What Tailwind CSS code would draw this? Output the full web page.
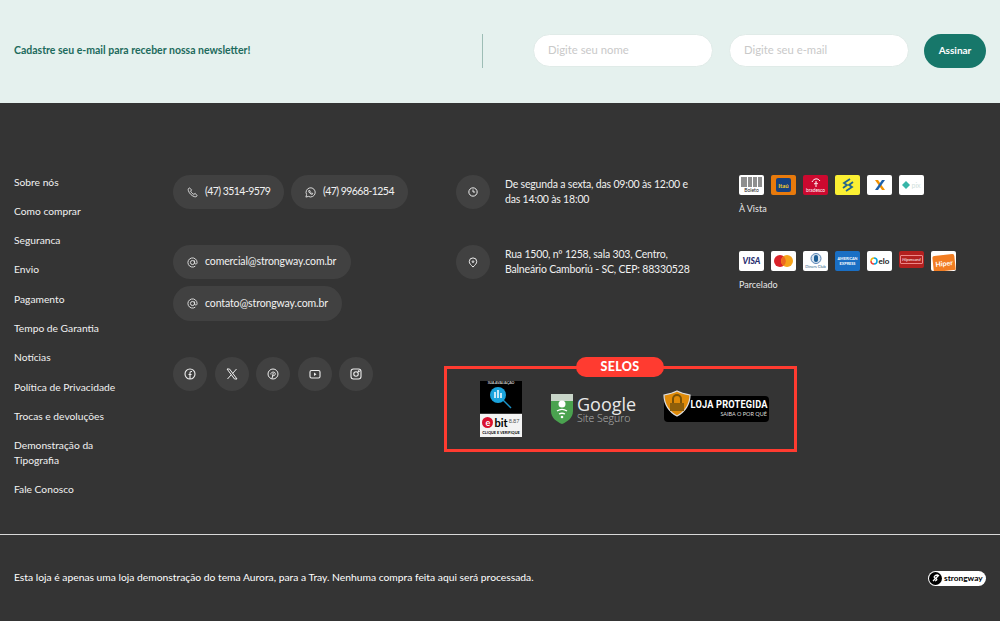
<!DOCTYPE html>
<html lang="pt-BR">
<head>
<meta charset="utf-8">
<script src="https://cdn.jsdelivr.net/npm/@tailwindcss/browser@4"></script>
</head>
<body class="bg-[#343434] font-['Lato','Noto_Sans',sans-serif]">
<div class="w-[1000px] h-[621px] overflow-hidden flex flex-col">

  <section class="h-[103px] bg-[#e5f1ee] flex items-center pl-[14px] pr-[14px] pb-[2px] shrink-0">
    <p class="w-[468px] text-[10.5px] font-bold text-[#1d6b5c]">Cadastre seu e-mail para receber nossa newsletter!</p>
    <div class="w-px h-[34px] bg-[#9dbdb5]"></div>
    <div class="ml-[50px] w-[180px] h-[33px] rounded-full bg-white border border-[#e0ebe8] flex items-center pl-[14px] text-[11.3px] text-[#c9c9c9]">Digite seu nome</div>
    <div class="ml-[16px] w-[180px] h-[33px] rounded-full bg-white border border-[#e0ebe8] flex items-center pl-[14px] text-[11.3px] text-[#c9c9c9]">Digite seu e-mail</div>
    <div class="ml-[15px] w-[62px] h-[34px] rounded-full bg-[#17776a] flex items-center justify-center text-[10px] font-bold text-white">Assinar</div>
  </section>

  <section class="flex pl-[14px] pt-[72px] h-[431px] shrink-0 text-[#f1f1f1]">
    <nav class="w-[159px] flex flex-col gap-[14.3px] text-[10.25px] leading-[15px] -mt-[0.5px]">
      <a>Sobre nós</a>
      <a>Como comprar</a>
      <a>Seguranca</a>
      <a>Envio</a>
      <a>Pagamento</a>
      <a>Tempo de Garantia</a>
      <a>Notícias</a>
      <a>Política de Privacidade</a>
      <a>Trocas e devoluções</a>
      <a class="w-[110px]">Demonstração da Tipografia</a>
      <a>Fale Conosco</a>
    </nav>

    <div class="w-[283px] flex flex-col">
      <div class="flex gap-[7px]">
        <div class="h-[34px] w-[111px] rounded-full bg-[#414141] flex items-center pl-[14px] gap-[7px] text-[10.5px] tracking-[-0.55px]">
          <svg class="w-[11px] h-[11px]" viewBox="0 0 24 24" fill="none" stroke="#e5e5e5" stroke-width="2"><path d="M5 2c-2 1-3 3-2 6 2 6 7 11 13 13 3 1 5 0 6-2l-4-5-3 2c-3-1-6-4-7-7l2-3z"/></svg>
          <span>(47) 3514-9579</span>
        </div>
        <div class="h-[34px] w-[117px] rounded-full bg-[#414141] flex items-center pl-[14px] gap-[7px] text-[10.5px] tracking-[-0.55px]">
          <svg class="w-[11px] h-[11px]" viewBox="0 0 24 24" fill="none" stroke="#e5e5e5" stroke-width="2"><path d="M2 22l1.5-5.5A10 10 0 1 1 7.5 20.500z"/><path d="M8 8c0 4 4 8 8 8l1-2-3-1-1 1c-1-.5-2-1.500-2.500-2.500l1-1-1-3z"/></svg>
          <span>(47) 99668-1254</span>
        </div>
      </div>
      <div class="mt-[36px] h-[34px] w-[178px] rounded-full bg-[#414141] flex items-center pl-[14px] gap-[7px] text-[10.5px] tracking-[-0.12px]">
        <svg class="w-[11px] h-[11px]" viewBox="0 0 24 24" fill="none" stroke="#e5e5e5" stroke-width="2"><circle cx="12" cy="12" r="4.500"/><path d="M16.500 7.500v6a3 3 0 0 0 5.500 0V12a10 10 0 1 0-4 8"/></svg>
        <span>comercial@strongway.com.br</span>
      </div>
      <div class="mt-[7px] h-[35px] w-[169px] rounded-full bg-[#414141] flex items-center pl-[14px] gap-[7px] text-[10.5px] tracking-[-0.12px]">
        <svg class="w-[11px] h-[11px]" viewBox="0 0 24 24" fill="none" stroke="#e5e5e5" stroke-width="2"><circle cx="12" cy="12" r="4.500"/><path d="M16.500 7.500v6a3 3 0 0 0 5.500 0V12a10 10 0 1 0-4 8"/></svg>
        <span>contato@strongway.com.br</span>
      </div>
      <div class="mt-[36px] flex gap-[7.500px]">
        <div class="w-[34px] h-[34px] rounded-full bg-[#414141] flex items-center justify-center">
          <svg class="w-[12px] h-[12px]" viewBox="0 0 24 24" fill="none" stroke="#eee" stroke-width="2.200"><circle cx="12" cy="12" r="10"/><path d="M16 7h-1.500C13 7 12 8 12 9.500V22M9 13h6"/></svg>
        </div>
        <div class="w-[34px] h-[34px] rounded-full bg-[#414141] flex items-center justify-center">
          <svg class="w-[12px] h-[12px]" viewBox="0 0 24 24" fill="none" stroke="#eee" stroke-width="2"><path d="M2 2h5l15 20h-5z"/><path d="M21 2l-8 9M10.500 13.500L3 22"/></svg>
        </div>
        <div class="w-[34px] h-[34px] rounded-full bg-[#414141] flex items-center justify-center">
          <svg class="w-[12px] h-[12px]" viewBox="0 0 24 24" fill="none" stroke="#eee" stroke-width="2"><circle cx="12" cy="12" r="10"/><path d="M10 21l2.500-11M8 13c-2-5 8-7 8.500-2 .3 4-4 6-5 3"/></svg>
        </div>
        <div class="w-[34px] h-[34px] rounded-full bg-[#414141] flex items-center justify-center">
          <svg class="w-[12px] h-[12px]" viewBox="0 0 24 24" fill="none" stroke="#eee" stroke-width="2.200"><rect x="2" y="5" width="20" height="15" rx="3"/><path d="M10 9l5 3.500-5 3.500z" fill="#eee" stroke="none"/></svg>
        </div>
        <div class="w-[34px] h-[34px] rounded-full bg-[#414141] flex items-center justify-center">
          <svg class="w-[12px] h-[12px]" viewBox="0 0 24 24" fill="none" stroke="#eee" stroke-width="2.200"><rect x="2" y="2" width="20" height="20" rx="5"/><circle cx="12" cy="12" r="4.500"/><circle cx="17.500" cy="6.500" r="1" fill="#eee"/></svg>
        </div>
      </div>
    </div>

    <div class="w-[353px] -ml-[12px] flex flex-col relative">
      <div class="ml-[12px] flex gap-[15px] h-[34px]">
        <div class="w-[34px] h-[34px] rounded-full bg-[#414141] flex items-center justify-center shrink-0">
          <svg class="w-[10px] h-[10px]" viewBox="0 0 24 24" fill="none" stroke="#eee" stroke-width="2.400"><circle cx="12" cy="12" r="10"/><path d="M12 6v6h5"/></svg>
        </div>
        <p class="text-[10.5px] leading-[15px] pt-[2px] w-[200px] tracking-[-0.18px]">De segunda a sexta, das 09:00 às 12:00 e das 14:00 às 18:00</p>
      </div>
      <div class="ml-[12px] mt-[36px] flex gap-[15px] h-[34px]">
        <div class="w-[34px] h-[34px] rounded-full bg-[#414141] flex items-center justify-center shrink-0">
          <svg class="w-[10px] h-[11px]" viewBox="0 0 24 24" fill="none" stroke="#eee" stroke-width="2.400"><path d="M12 23c5-5 9-9 9-13a9 9 0 0 0-18 0c0 4 4 8 9 13z"/><circle cx="12" cy="10" r="2"/></svg>
        </div>
        <p class="text-[10.5px] leading-[15px] pt-[2px] w-[200px] tracking-[-0.18px]">Rua 1500, nº 1258, sala 303, Centro, Balneário Camboriú - SC, CEP: 88330528</p>
      </div>

      <div class="relative mt-[87px] w-[353px] h-[86px] border-[3px] border-[#ff3b30] flex items-center">
        <div class="absolute -top-[12px] left-[129px] w-[88px] h-[20px] rounded-full bg-[#ff3b30] flex items-center justify-center text-[12.5px] font-black tracking-[0.3px] text-white">SELOS</div>

        <div class="ml-[33px] w-[42px] h-[56px] flex flex-col shrink-0">
          <div class="h-[32px] bg-black flex flex-col items-center">
            <span class="text-[3.500px] leading-[5px] text-white">SUA AVALIAÇÃO</span>
            <svg class="w-[24px] h-[24px]" viewBox="0 0 24 24"><path d="M13 13l9 9" stroke="#1b93c9" stroke-width="1.500"/><circle cx="9" cy="9" r="8" fill="#1aa3dc"/><path d="M6 6v6M9 4v8M12 7v5" stroke="#fff" stroke-width="1.500"/></svg>
          </div>
          <div class="h-[1px] bg-[#343434]"></div>
          <div class="flex-1 bg-[#f3f3f3] flex flex-col items-center">
            <div class="flex items-center h-[16px] gap-[1px]">
              <span class="w-[11px] h-[11px] rounded-full bg-[#d9112f] flex items-center justify-center text-[9px] leading-none font-bold text-white">e</span>
              <span class="text-[11px] leading-none font-bold text-black">bit</span>
              <span class="text-[5.500px] leading-none text-[#555]">8.87</span>
            </div>
            <span class="text-[3.800px] leading-[6px] font-bold text-black">CLIQUE E VERIFIQUE</span>
          </div>
        </div>

        <div class="ml-[29px] w-[87px] flex items-center gap-[4px] shrink-0">
          <svg class="w-[22px] h-[30px] shrink-0" viewBox="0 0 22 30"><path d="M0 0h22v17c0 7-6 11-11 13C6 28 0 24 0 17z" fill="#4aa24f"/><path d="M0 0h22v7H0z" fill="#c9d6c9"/><circle cx="11" cy="10" r="3.500" fill="#fff"/><path d="M6 17c3-2 7-2 10 0M8 20c2-1 4-1 6 0" stroke="#fff" stroke-width="1.300" fill="none"/><circle cx="11" cy="23" r="1.300" fill="#fff"/></svg>
          <div class="flex flex-col text-[#e8e8e8]">
            <span class="text-[18px] leading-[18px] font-['Open_Sans',sans-serif]">Google</span>
            <span class="text-[10.5px] leading-[11px] text-[#b5b5b5] font-light font-['Open_Sans',sans-serif] whitespace-nowrap">Site Seguro</span>
          </div>
        </div>

        <div class="ml-[26px] w-[105px] h-[26px] rounded-[4px] bg-black relative shrink-0 flex flex-col items-end pr-[1px] pt-[3px]">
          <svg class="absolute -left-[1px] -top-[6px] w-[28px] h-[27px]" viewBox="0 0 28 27"><path d="M1 5c5-1 9-2 13-4 4 2 8 3 13 4 0 9-5 17-13 21C6 22 1 14 1 5z" fill="#e08b09" stroke="#ddd" stroke-width="1.200"/><path d="M7 13h14v8h-14z" fill="#8f5f0a"/><path d="M10 13V9a4 4 0 0 1 8 0v4" fill="none" stroke="#7a5208" stroke-width="2"/></svg>
          <span class="text-[10.500px] leading-[12px] font-bold tracking-[0.2px] text-white font-['Roboto',sans-serif] whitespace-nowrap origin-right scale-x-[0.88]">LOJA PROTEGIDA</span>
          <span class="text-[5.500px] leading-[6px] text-[#ddd] whitespace-nowrap mr-[1px]">SAIBA O POR QUÊ</span>
        </div>
      </div>
    </div>

    <div class="-ml-[58px] flex flex-col">
      <div class="flex gap-[7px] h-[20px]">
        <div class="w-[25px] h-[20px] rounded-[2px] bg-white flex flex-col items-center justify-center">
          <svg class="w-[21px] h-[10px]" viewBox="0 0 21 10"><path d="M1 0v10M3 0v10M5 0v10M8 0v10M10 0v10M13 0v10M15 0v10M18 0v10M20 0v10" stroke="#333" stroke-width="1.100"/></svg>
          <span class="text-[5px] leading-[6px] text-[#222]">Boleto</span>
        </div>
        <div class="w-[25px] h-[20px] rounded-[2px] bg-[#e87a0c] flex items-center justify-center"><div class="w-[15px] h-[14px] rounded-[2px] bg-[#16407d] flex items-center justify-center text-[6px] font-bold text-[#f7cf2a]">Itaú</div></div>
        <div class="w-[25px] h-[20px] rounded-[2px] bg-[#cc092f] flex flex-col items-center justify-center">
          <svg class="w-[10px] h-[9px]" viewBox="0 0 10 9" fill="none" stroke="#fff"><path d="M1 4c2-4 6-4 8-1M5 3v6M3 6c2-1 3-1 4 0"/></svg>
          <span class="text-[4.800px] leading-[6px] text-white">bradesco</span>
        </div>
        <div class="w-[25px] h-[20px] rounded-[2px] bg-[#fbf033] flex items-center justify-center">
          <svg class="w-[14px] h-[14px]" viewBox="0 0 14 14" fill="none" stroke="#22658c" stroke-width="1.800"><path d="M9 1L3 5l3 2-4 3M5 13l6-4-3-2 4-3"/></svg>
        </div>
        <div class="w-[25px] h-[20px] rounded-[2px] bg-white flex items-center justify-center">
          <svg class="w-[12px] h-[12px]" viewBox="0 0 12 12"><path d="M1 1h3l7 10H8z" fill="#f39200"/><path d="M11 1H8L1 11h3z" fill="#1c60ab"/></svg>
        </div>
        <div class="w-[25px] h-[20px] rounded-[2px] bg-white flex items-center justify-center gap-[1px]">
          <svg class="w-[8px] h-[8px]" viewBox="0 0 8 8"><path d="M4 0l4 4-4 4-4-4z" fill="#37b5a8"/></svg>
          <span class="text-[7px] leading-none text-[#cfdfdc]">pix</span>
        </div>
      </div>
      <p class="mt-[8px] text-[9px] leading-[11px] text-[#e8e8e8]">À Vista</p>
      <div class="mt-[37px] flex gap-[7px] h-[20px]">
        <div class="w-[25px] h-[20px] rounded-[2px] bg-white flex items-center justify-center text-[8.500px] font-black italic text-[#2a2f70]">VISA</div>
        <div class="w-[25px] h-[20px] rounded-[2px] bg-white flex items-center justify-center">
          <svg class="w-[19px] h-[12px]" viewBox="0 0 19 12"><circle cx="6" cy="6" r="6" fill="#d9222a"/><circle cx="13" cy="6" r="6" fill="#f5a31a"/><path d="M9.500 1.200a6 6 0 0 1 0 9.600a6 6 0 0 1 0-9.600z" fill="#ee6a1f"/></svg>
        </div>
        <div class="w-[25px] h-[20px] rounded-[2px] bg-white flex flex-col items-center justify-center">
          <svg class="w-[12px] h-[11px]" viewBox="0 0 12 11"><circle cx="6" cy="5.500" r="5" fill="#d7e3ef" stroke="#5a85b5"/><rect x="4" y="2" width="4" height="7" rx="2" fill="#1c5e96"/></svg>
          <span class="text-[4px] leading-[5px] text-[#2a5b88]">Diners Club</span>
        </div>
        <div class="w-[25px] h-[20px] rounded-[2px] bg-[#1a6fc4] flex flex-col items-center justify-center text-[3.800px] leading-[5px] font-bold text-white">
          <span>AMERICAN</span><span>EXPRESS</span>
        </div>
        <div class="w-[25px] h-[20px] rounded-[2px] bg-white flex items-center justify-center gap-[1px]">
          <svg class="w-[8px] h-[8px]" viewBox="0 0 8 8" fill="none" stroke-width="1.500"><path d="M4 1a3 3 0 0 0-3 3" stroke="#eab308"/><path d="M1 4a3 3 0 0 0 3 3" stroke="#ef4135"/><path d="M4 7a3 3 0 0 0 3-3 3 3 0 0 0-3-3" stroke="#00a4e0"/></svg>
          <span class="text-[8px] leading-none font-bold text-[#222]">elo</span>
        </div>
        <div class="w-[25px] h-[17px] rounded-[2px] bg-[#b3201f] flex items-center justify-center">
          <span class="text-[4.500px] leading-[7px] italic text-white border border-[#e88] rounded-[1px] px-[1px]">Hipercard</span>
        </div>
        <div class="w-[25px] h-[20px] rounded-[2px] bg-white flex items-end justify-center overflow-hidden">
          <div class="w-[22px] h-[16px] bg-[#f27d22] rounded-t-[2px] -rotate-6 flex items-center justify-center text-[7px] font-bold text-white">Hiper</div>
        </div>
      </div>
      <p class="mt-[8px] text-[9px] leading-[11px] text-[#e8e8e8]">Parcelado</p>
    </div>
  </section>

  <footer class="h-[87px] border-t border-[#d8d8d8] flex items-center justify-between pl-[14px] pr-[14px] text-[10.3px] text-white">
    <p>Esta loja é apenas uma loja demonstração do tema Aurora, para a Tray. Nenhuma compra feita aqui será processada.</p>
    <div class="w-[58px] h-[15px] rounded-full bg-white flex items-center gap-[2px] pl-[1px] shrink-0">
      <span class="w-[13px] h-[13px] rounded-full bg-black flex items-center justify-center shrink-0">
        <svg class="w-[8px] h-[8px]" viewBox="0 0 8 8" fill="none" stroke="#fff" stroke-width="1.300"><path d="M6 1C3 1 1 3 3 4s3 2 0 3M7 1L1 7"/></svg>
      </span>
      <span class="text-[8.3px] leading-none font-bold text-black">strongway</span>
    </div>
  </footer>
</div>
</body>
</html>
